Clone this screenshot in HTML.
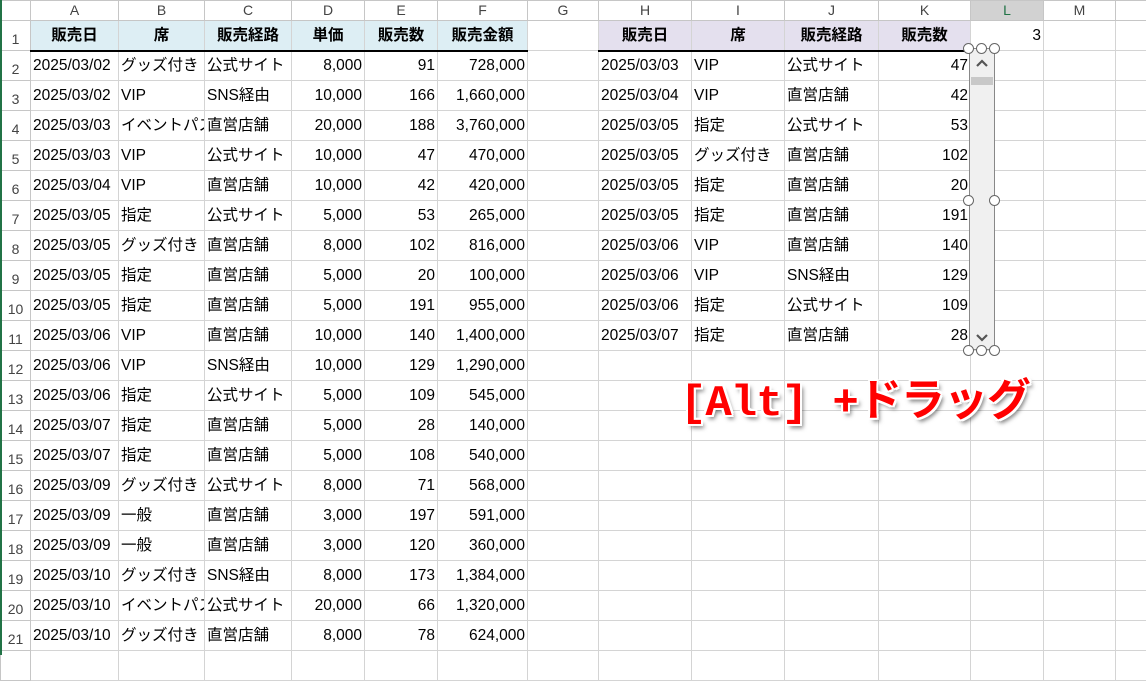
<!DOCTYPE html>
<html><head><meta charset="utf-8"><style>
body{margin:0;width:1146px;height:655px;overflow:hidden;background:#fff;font-family:"Liberation Sans","Noto Sans CJK JP",sans-serif;position:relative}
table{border-collapse:collapse;table-layout:fixed;position:absolute;left:0;top:0;width:1146px}
tr{height:30px}
td{height:30px;border:1px solid #d4d4d4;font-size:15.5px;padding:0 2px;white-space:nowrap;overflow:hidden;color:#000;vertical-align:middle;line-height:17px;box-sizing:border-box}
tr.ch{height:20px}
tr.ch td{height:20px;background:#fff;text-align:center;color:#444;font-size:14px;padding:0;vertical-align:middle;border-color:#c6c6c6}
td.rn{background:#fff;color:#444;text-align:center;font-size:14px;padding:8px 0 0 0;border-color:#c6c6c6}
td.r{text-align:right}
.hb{background:#ddeef4;font-weight:bold;text-align:center;border-bottom:2px solid #000}
.hp{background:#e4e0ee;font-weight:bold;text-align:center;border-bottom:2px solid #000}
.sel{background:#d2d2d2 !important;color:#217346 !important}
.sb{position:absolute;left:969px;top:48px;width:26px;height:302px;background:#f0f0f0;border:1px solid #888;box-sizing:border-box}
.h{position:absolute;width:9px;height:9px;border:1.5px solid #666;border-radius:50%;background:#fff}
.big{position:absolute;left:680px;top:364px;font-family:"Liberation Mono","Noto Sans CJK JP",monospace;font-size:44px;font-weight:bold;color:#f00;letter-spacing:-1px;text-shadow:2px 0 #fff,-2px 0 #fff,0 2px #fff,0 -2px #fff,2px 2px #fff,-2px -2px #fff,2px -2px #fff,-2px 2px #fff,3px 4px 4px rgba(0,0,0,.5);white-space:nowrap}
</style></head><body>
<div style="position:absolute;left:0;top:0;width:2px;height:655px;background:#217346;z-index:5"></div>
<table>
<colgroup><col style="width:30px"><col style="width:88px"><col style="width:86px"><col style="width:87px"><col style="width:73px"><col style="width:73px"><col style="width:90px"><col style="width:71px"><col style="width:93px"><col style="width:93px"><col style="width:94px"><col style="width:92px"><col style="width:73px"><col style="width:72px"><col style="width:31px"></colgroup>
<tr class="ch"><td></td><td>A</td><td>B</td><td>C</td><td>D</td><td>E</td><td>F</td><td>G</td><td>H</td><td>I</td><td>J</td><td>K</td><td class="sel">L</td><td>M</td><td></td></tr>
<tr><td class="rn">1</td><td class="hb">販売日</td><td class="hb">席</td><td class="hb">販売経路</td><td class="hb">単価</td><td class="hb">販売数</td><td class="hb">販売金額</td><td></td><td class="hp">販売日</td><td class="hp">席</td><td class="hp">販売経路</td><td class="hp">販売数</td><td class="r">3</td><td></td><td></td></tr>
<tr><td class="rn">2</td><td>2025/03/02</td><td>グッズ付き</td><td>公式サイト</td><td class="r">8,000</td><td class="r">91</td><td class="r">728,000</td><td></td><td>2025/03/03</td><td>VIP</td><td>公式サイト</td><td class="r">47</td><td></td><td></td><td></td></tr>
<tr><td class="rn">3</td><td>2025/03/02</td><td>VIP</td><td>SNS経由</td><td class="r">10,000</td><td class="r">166</td><td class="r">1,660,000</td><td></td><td>2025/03/04</td><td>VIP</td><td>直営店舗</td><td class="r">42</td><td></td><td></td><td></td></tr>
<tr><td class="rn">4</td><td>2025/03/03</td><td>イベントパス</td><td>直営店舗</td><td class="r">20,000</td><td class="r">188</td><td class="r">3,760,000</td><td></td><td>2025/03/05</td><td>指定</td><td>公式サイト</td><td class="r">53</td><td></td><td></td><td></td></tr>
<tr><td class="rn">5</td><td>2025/03/03</td><td>VIP</td><td>公式サイト</td><td class="r">10,000</td><td class="r">47</td><td class="r">470,000</td><td></td><td>2025/03/05</td><td>グッズ付き</td><td>直営店舗</td><td class="r">102</td><td></td><td></td><td></td></tr>
<tr><td class="rn">6</td><td>2025/03/04</td><td>VIP</td><td>直営店舗</td><td class="r">10,000</td><td class="r">42</td><td class="r">420,000</td><td></td><td>2025/03/05</td><td>指定</td><td>直営店舗</td><td class="r">20</td><td></td><td></td><td></td></tr>
<tr><td class="rn">7</td><td>2025/03/05</td><td>指定</td><td>公式サイト</td><td class="r">5,000</td><td class="r">53</td><td class="r">265,000</td><td></td><td>2025/03/05</td><td>指定</td><td>直営店舗</td><td class="r">191</td><td></td><td></td><td></td></tr>
<tr><td class="rn">8</td><td>2025/03/05</td><td>グッズ付き</td><td>直営店舗</td><td class="r">8,000</td><td class="r">102</td><td class="r">816,000</td><td></td><td>2025/03/06</td><td>VIP</td><td>直営店舗</td><td class="r">140</td><td></td><td></td><td></td></tr>
<tr><td class="rn">9</td><td>2025/03/05</td><td>指定</td><td>直営店舗</td><td class="r">5,000</td><td class="r">20</td><td class="r">100,000</td><td></td><td>2025/03/06</td><td>VIP</td><td>SNS経由</td><td class="r">129</td><td></td><td></td><td></td></tr>
<tr><td class="rn">10</td><td>2025/03/05</td><td>指定</td><td>直営店舗</td><td class="r">5,000</td><td class="r">191</td><td class="r">955,000</td><td></td><td>2025/03/06</td><td>指定</td><td>公式サイト</td><td class="r">109</td><td></td><td></td><td></td></tr>
<tr><td class="rn">11</td><td>2025/03/06</td><td>VIP</td><td>直営店舗</td><td class="r">10,000</td><td class="r">140</td><td class="r">1,400,000</td><td></td><td>2025/03/07</td><td>指定</td><td>直営店舗</td><td class="r">28</td><td></td><td></td><td></td></tr>
<tr><td class="rn">12</td><td>2025/03/06</td><td>VIP</td><td>SNS経由</td><td class="r">10,000</td><td class="r">129</td><td class="r">1,290,000</td><td></td><td></td><td></td><td></td><td></td><td></td><td></td><td></td></tr>
<tr><td class="rn">13</td><td>2025/03/06</td><td>指定</td><td>公式サイト</td><td class="r">5,000</td><td class="r">109</td><td class="r">545,000</td><td></td><td></td><td></td><td></td><td></td><td></td><td></td><td></td></tr>
<tr><td class="rn">14</td><td>2025/03/07</td><td>指定</td><td>直営店舗</td><td class="r">5,000</td><td class="r">28</td><td class="r">140,000</td><td></td><td></td><td></td><td></td><td></td><td></td><td></td><td></td></tr>
<tr><td class="rn">15</td><td>2025/03/07</td><td>指定</td><td>直営店舗</td><td class="r">5,000</td><td class="r">108</td><td class="r">540,000</td><td></td><td></td><td></td><td></td><td></td><td></td><td></td><td></td></tr>
<tr><td class="rn">16</td><td>2025/03/09</td><td>グッズ付き</td><td>公式サイト</td><td class="r">8,000</td><td class="r">71</td><td class="r">568,000</td><td></td><td></td><td></td><td></td><td></td><td></td><td></td><td></td></tr>
<tr><td class="rn">17</td><td>2025/03/09</td><td>一般</td><td>直営店舗</td><td class="r">3,000</td><td class="r">197</td><td class="r">591,000</td><td></td><td></td><td></td><td></td><td></td><td></td><td></td><td></td></tr>
<tr><td class="rn">18</td><td>2025/03/09</td><td>一般</td><td>直営店舗</td><td class="r">3,000</td><td class="r">120</td><td class="r">360,000</td><td></td><td></td><td></td><td></td><td></td><td></td><td></td><td></td></tr>
<tr><td class="rn">19</td><td>2025/03/10</td><td>グッズ付き</td><td>SNS経由</td><td class="r">8,000</td><td class="r">173</td><td class="r">1,384,000</td><td></td><td></td><td></td><td></td><td></td><td></td><td></td><td></td></tr>
<tr><td class="rn">20</td><td>2025/03/10</td><td>イベントパス</td><td>公式サイト</td><td class="r">20,000</td><td class="r">66</td><td class="r">1,320,000</td><td></td><td></td><td></td><td></td><td></td><td></td><td></td><td></td></tr>
<tr><td class="rn">21</td><td>2025/03/10</td><td>グッズ付き</td><td>直営店舗</td><td class="r">8,000</td><td class="r">78</td><td class="r">624,000</td><td></td><td></td><td></td><td></td><td></td><td></td><td></td><td></td></tr>
<tr><td class="rn"></td><td></td><td></td><td></td><td></td><td></td><td></td><td></td><td></td><td></td><td></td><td></td><td></td><td></td><td></td></tr>
</table>
<div class="sb">
<svg width="24" height="300" style="position:absolute;left:0;top:0"><path d="M7 17 L12 12 L17 17" stroke="#555" stroke-width="2.2" fill="none"/><rect x="1" y="28" width="22" height="8" fill="#c8c8c8"/><path d="M7 286 L12 291 L17 286" stroke="#555" stroke-width="2.2" fill="none"/></svg>
</div>
<div class="h" style="left:963px;top:43px"></div><div class="h" style="left:976px;top:43px"></div><div class="h" style="left:989px;top:43px"></div>
<div class="h" style="left:963px;top:195px"></div><div class="h" style="left:989px;top:195px"></div>
<div class="h" style="left:963px;top:345px"></div><div class="h" style="left:976px;top:345px"></div><div class="h" style="left:989px;top:345px"></div>
<div class="big">[Alt] +ドラッグ</div>
</body></html>
